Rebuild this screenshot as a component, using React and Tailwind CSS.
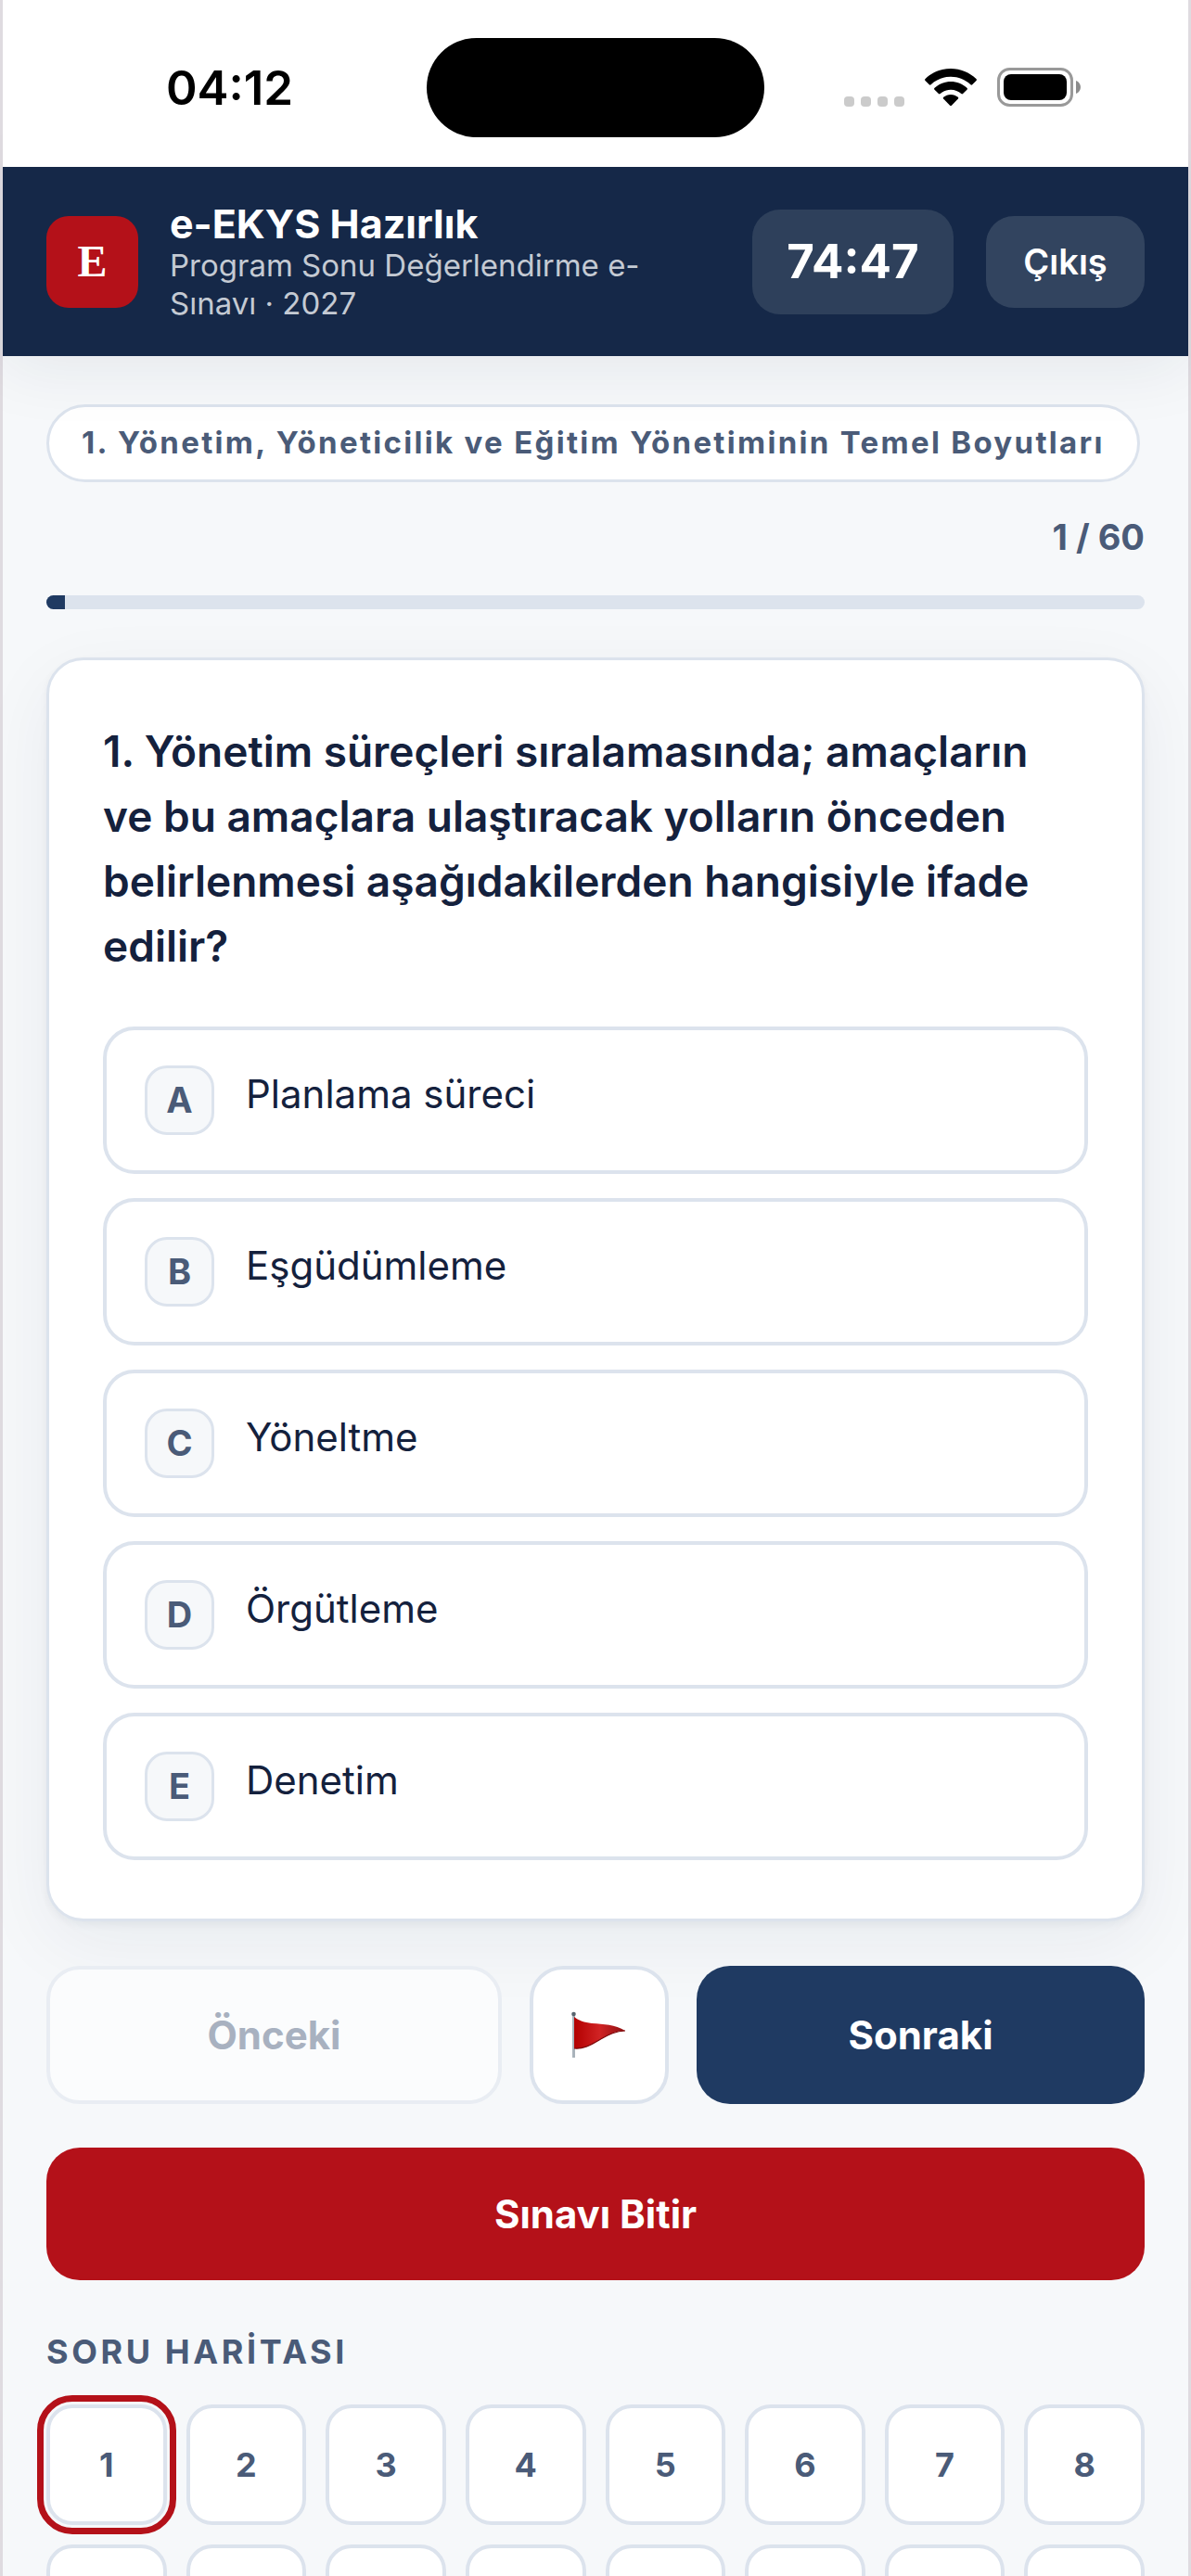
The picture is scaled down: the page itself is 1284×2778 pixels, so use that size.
import { useState } from 'react'
import clsx from 'clsx'

const TOTAL = 60

const QUESTION = {
  topic: '1. Yönetim, Yöneticilik ve Eğitim Yönetiminin Temel Boyutları',
  text: '1. Yönetim süreçleri sıralamasında; amaçların ve bu amaçlara ulaştıracak yolların önceden belirlenmesi aşağıdakilerden hangisiyle ifade edilir?',
  options: [
    { id: 'A', text: 'Planlama süreci' },
    { id: 'B', text: 'Eşgüdümleme' },
    { id: 'C', text: 'Yöneltme' },
    { id: 'D', text: 'Örgütleme' },
    { id: 'E', text: 'Denetim' },
  ],
}

function WifiIcon() {
  return (
    <svg width="56" height="41" viewBox="0 0 56 41" aria-hidden="true">
      <path d="M28 0C17.4 0 7.700 4.200 0.600 11c-.7.700-.7 1.300-.1 1.900l4.300 4.300c.6.600 1.200.600 1.800 0C12.200 12 19.700 8.800 28 8.800s15.800 3.200 21.400 8.400c.6.600 1.200.600 1.800 0l4.300-4.300c.6-.6.600-1.200-.1-1.900C48.300 4.200 38.600 0 28 0z" />
      <path d="M28 14c-6.700 0-12.800 2.600-17.400 6.800-.7.600-.7 1.300-.1 1.900l4.400 4.400c.6.600 1.200.600 1.800 0 3-2.700 6.900-4.300 11.300-4.300s8.300 1.600 11.300 4.300c.6.600 1.200.600 1.800 0l4.400-4.400c.6-.6.600-1.300-.1-1.900C40.800 16.600 34.700 14 28 14z" />
      <path d="M28 28c-3 0-5.700 1.100-7.800 2.800-.6.500-.6 1.100-.1 1.700l7 7.200c.6.600 1.200.600 1.800 0l7-7.200c.5-.6.500-1.200-.1-1.700C33.700 29.100 31 28 28 28z" />
    </svg>
  )
}

function BatteryIcon() {
  return (
    <svg width="91" height="42" viewBox="0 0 91 42" aria-hidden="true">
      <rect x="1.500" y="1.500" width="79" height="39" rx="12" fill="none" stroke="#999" strokeWidth="3" />
      <rect x="7" y="7" width="68" height="28" rx="8" />
      <path d="M85 14c3 1 5 4 5 7s-2 6-5 7z" fill="#8c8c8c" />
    </svg>
  )
}

function FlagIcon() {
  return (
    <svg width="60" height="52" viewBox="0 0 60 52" aria-hidden="true">
      <defs>
        <linearGradient id="flag-red" x1="0" x2="1">
          <stop offset="0" stopColor="#b30000" />
          <stop offset="0.5" stopColor="#d02324" />
          <stop offset="1" stopColor="#8f1012" />
        </linearGradient>
      </defs>
      <rect x="1" y="4" width="3" height="46" fill="#a9b3bb" />
      <circle cx="2.500" cy="3" r="2.300" fill="#56646e" />
      <path d="M3 6c5 4 11 6 19 7 13 1 25 1 36 8-11 0-19 5-28 10-10 6-18 10-27 9z" fill="url(#flag-red)" />
      <path d="M3 40c9 1 17-3 27-9 9-5 17-10 28-10" fill="none" stroke="#7c090b" strokeWidth="1.200" />
    </svg>
  )
}

function StatusBar() {
  return (
    <div className="relative z-20 grid h-[180px] grid-cols-[1fr_364px_1fr] items-center bg-white pt-2 text-black">
      <span className="pl-8 text-center text-[51px] font-semibold leading-none">04:12</span>
      <div className="h-[107px] rounded-full bg-black" />
      <div className="flex items-end pl-[86px]">
        <div className="mr-[22px] flex gap-[7px]">
          {[0, 1, 2, 3].map(i => (
            <span key={i} className="size-[11px] rounded-[4px] bg-[#cbcbcb]" />
          ))}
        </div>
        <div className="mr-[22px]"><WifiIcon /></div>
        <BatteryIcon />
      </div>
    </div>
  )
}

export default function App() {
  const [answer, setAnswer] = useState(null)
  const [current, setCurrent] = useState(1)

  return (
    <div className="min-h-screen border-x-[3px] border-[#dfdbe0] bg-[#f6f8fa] font-['Inter','Noto_Sans',sans-serif] text-[#14213d]">
      <StatusBar />

      {/* Header */}
      <header className="relative z-10 flex min-h-[204px] items-center bg-[#152848] px-[47px] text-white shadow-[0_12px_72px_rgba(20,33,61,0.08)]">
        <div className="flex size-[99px] shrink-0 items-center justify-center rounded-[24px] bg-[#b41119] font-['Liberation_Serif',serif] text-[48px] font-bold">
          E
        </div>
        <div className="ml-[34px] min-w-0 flex-1 pr-16">
          <h1 className="text-[43px] font-bold leading-[50px]">e-EKYS Hazırlık</h1>
          <p className="text-[33px] leading-[41px] text-[#c4cad3]">Program Sonu Değerlendirme e-Sınavı · 2027</p>
        </div>
        <div className="flex h-[113px] w-[217px] shrink-0 items-center justify-center rounded-[30px] bg-[#2e405b] text-[51px] font-bold">
          74:47
        </div>
        <button className="ml-[35px] h-[99px] w-[171px] shrink-0 rounded-[30px] bg-[#32445f] text-[38px] font-semibold">
          Çıkış
        </button>
      </header>

      <main className="px-[47px] pt-[52px]">
        <div className="flex">
          <div className="flex h-[84px] items-center whitespace-nowrap rounded-full border-[3px] border-[#dce3ed] bg-white px-[35px] text-[33px] font-bold tracking-[0.07em] text-[#4a5b78]">
            {QUESTION.topic}
          </div>
        </div>

        <p className="mt-[34px] text-right text-[38px] font-bold leading-[50px] text-[#4a5b78]">{current} / {TOTAL}</p>

        <div className="mt-[38px] h-[15px] overflow-hidden rounded-full bg-[#dce3ed]">
          <div className="h-full bg-[#1f3a62]" style={{ width: `${(current / TOTAL) * 100}%` }} />
        </div>

        {/* Question */}
        <section className="mt-[52px] rounded-[40px] border-[3px] border-[#dce3ed] bg-white px-[58px] py-[63px] shadow-[0_4px_8px_rgba(20,33,61,0.05),0_24px_80px_rgba(20,33,61,0.06)]">
          <h2 className="text-[46px] font-semibold leading-[70px]">{QUESTION.text}</h2>
          <div className="mt-[52px] space-y-[26px]">
            {QUESTION.options.map(option => (
              <label
                key={option.id}
                className={clsx(
                  'relative flex items-start gap-[34px] rounded-[34px] border-4 bg-white px-[41px] py-[38px]',
                  answer === option.id ? 'border-[#1f3a62]' : 'border-[#dce3ed]'
                )}
              >
                <input
                  type="radio"
                  name="answer"
                  className="sr-only"
                  checked={answer === option.id}
                  onChange={() => setAnswer(option.id)}
                />
                <span className="flex size-[75px] shrink-0 items-center justify-center rounded-[24px] border-[3px] border-[#dce3ed] bg-[#f6f8fa] text-[38px] font-bold text-[#4a5b78]">
                  {option.id}
                </span>
                <span className="text-[42px] leading-[62px]">{option.text}</span>
              </label>
            ))}
          </div>
        </section>

        {/* Navigation */}
        <div className="relative mt-[48px] flex h-[149px] gap-[30px] text-[42px] font-bold">
          <button
            disabled={current === 1}
            onClick={() => setCurrent(current - 1)}
            className="flex-1 rounded-[36px] border-4 border-[#dce3ed] bg-white text-[#4a5b78] disabled:border-[#e9edf3] disabled:bg-[#fbfcfd] disabled:text-[#a8b1c0]"
          >
            Önceki
          </button>
          <button
            aria-label="İşaretle"
            className="flex w-[150px] items-center justify-center rounded-[36px] border-4 border-[#dce3ed] bg-white"
          >
            <FlagIcon />
          </button>
          <button onClick={() => setCurrent(current + 1)} className="flex-1 rounded-[36px] bg-[#1f3a62] text-white">
            Sonraki
          </button>
        </div>
        <button className="mt-[47px] h-[143px] w-full rounded-[36px] bg-[#b41119] text-[42px] font-bold text-white">
          Sınavı Bitir
        </button>

        {/* Question map */}
        <h3 className="mt-[52px] text-[36px] font-bold leading-[50px] tracking-widest text-[#4a5b78]">SORU HARİTASI</h3>
        <div className="mt-8 grid grid-cols-8 gap-[21px] pb-12">
          {Array.from({ length: TOTAL }, (_, i) => i + 1).map(n => (
            <button
              key={n}
              onClick={() => setCurrent(n)}
              className={clsx(
                'aspect-square rounded-[28px] border-4 border-[#dce3ed] bg-white text-[36px] font-bold text-[#4a5b78]',
                n === current && 'outline-[7px] outline-offset-[3px] outline-[#b41119]'
              )}
            >
              {n}
            </button>
          ))}
        </div>
      </main>
    </div>
  )
}
